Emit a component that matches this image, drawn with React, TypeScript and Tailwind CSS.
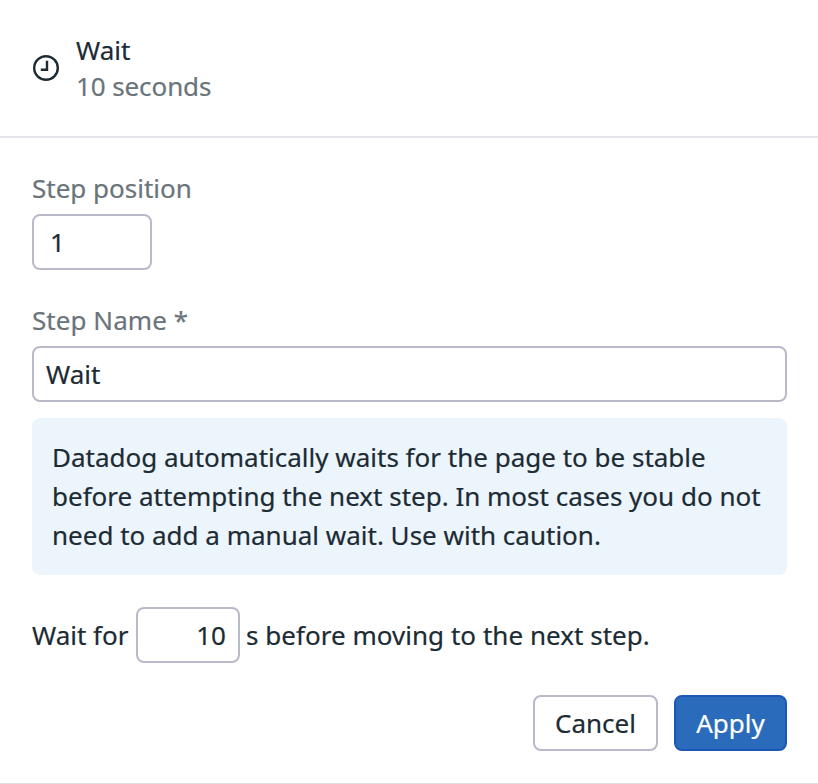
export default function App() {
  return (
    <div className="flex h-[784px] w-[818px] flex-col bg-white font-['Noto_Sans',sans-serif] text-[26px] text-[#1c2b34] [-webkit-text-stroke:0.2px]">
      <header className="flex h-[138px] items-center gap-4 border-b-2 border-[#e4e4eb] px-8">
        <svg className="size-7" viewBox="0 0 28 28" fill="none" stroke="#1c2b34" strokeWidth="2.4">
          <circle cx="14" cy="14" r="11.8" />
          <path d="M15 6.8v8.9H8.8" />
        </svg>
        <div className="leading-9">
          <div>Wait</div>
          <div className="tracking-[-0.1px] text-[#6a747a]">10 seconds</div>
        </div>
      </header>
      <main className="flex flex-1 flex-col px-8 pt-8">
        <label className="h-11 leading-9 text-[#6a747a]">Step position</label>
        <div className="flex h-14 w-[120px] items-center rounded-lg border-2 border-[#b9b9cc] px-4">1</div>
        <label className="mt-8 h-11 leading-9 tracking-[0.05px] text-[#6a747a]">Step Name *</label>
        <div className="flex h-14 w-[755px] items-center rounded-lg border-2 border-[#b9b9cc] px-3">Wait</div>
        <p className="mt-4 h-[157px] w-[755px] rounded-lg bg-[#ecf5fc] px-5 py-5 leading-[39px]">
          Datadog automatically waits for the page to be stable<br />
          before attempting the next step. In most cases you do not<br />
          need to add a manual wait. Use with caution.
        </p>
        <div className="mt-8 flex h-14 items-center">
          <span className="w-[104px]">Wait for</span>
          <div className="mr-1.5 flex h-14 w-[104px] items-center justify-end rounded-lg border-2 border-[#b9b9cc] px-3">10</div>
          <span className="tracking-[0.03px]">s before moving to the next step.</span>
        </div>
        <div className="mt-8 flex w-[755px] justify-end gap-4">
          <button className="h-14 w-[125px] rounded-lg border-2 border-[#b9b9cc]">Cancel</button>
          <button className="h-14 w-[113px] rounded-lg border-2 border-[#1c57b8] bg-[#2a6cbb] text-white">Apply</button>
        </div>
      </main>
      <div className="h-px bg-[#e0e0e0]" />
    </div>
  );
}
